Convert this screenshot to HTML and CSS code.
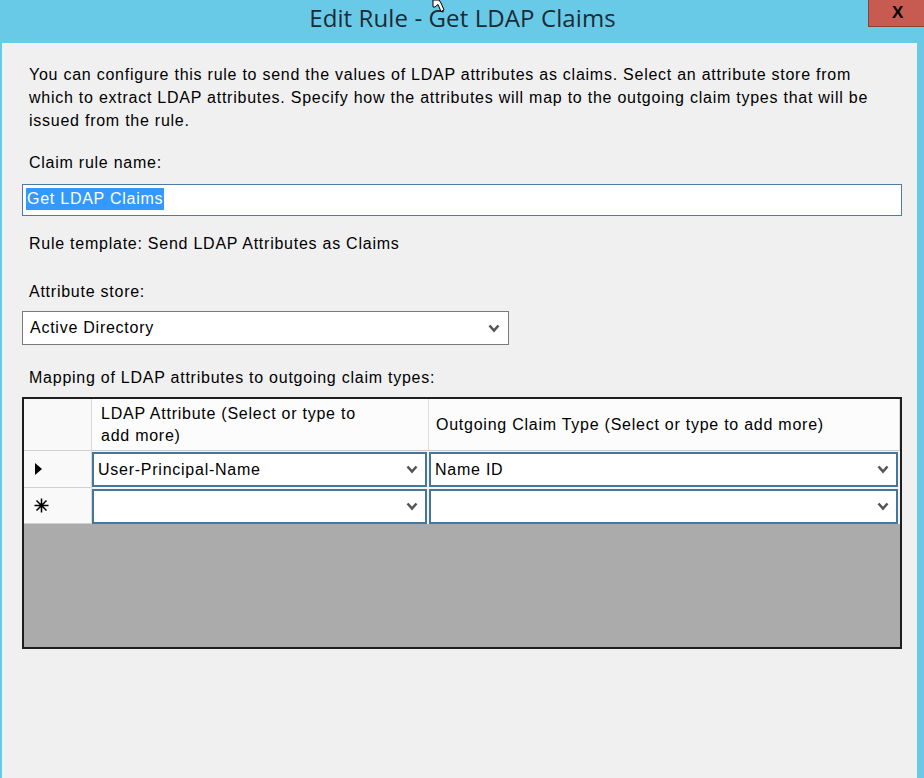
FILE: index.html
```html
<!DOCTYPE html>
<html>
<head>
<meta charset="utf-8">
<link rel="stylesheet" href="styles.css">
</head>
<body>
<div class="window">
  <div class="titlebar">
    <span class="title">Edit Rule - Get LDAP Claims</span>
    <div class="close">X</div>
    <svg class="cursor" width="18" height="16" viewBox="0 0 18 16"><polygon points="1,0 7,0 9,3 12,10 9,11.5 6,4.5 3,7 1,7" fill="#fff" stroke="#000" stroke-width="1"/></svg>
  </div>
  <div class="client">
    <p class="intro">You can configure this rule to send the values of LDAP attributes as claims. Select an attribute store from which to extract LDAP attributes. Specify how the attributes will map to the outgoing claim types that will be issued from the rule.</p>
    <div class="label l-name">Claim rule name:</div>
    <div class="textbox"><span class="sel">Get LDAP Claims</span></div>
    <div class="label l-template">Rule template: Send LDAP Attributes as Claims</div>
    <div class="label l-store">Attribute store:</div>
    <div class="combo">
      <span>Active Directory</span>
      <svg class="chev" width="12" height="9" viewBox="0 0 12 9"><polyline points="1.5,1.5 6,6.5 10.5,1.5" fill="none" stroke="#555" stroke-width="2.6"/></svg>
    </div>
    <div class="label l-map">Mapping of LDAP attributes to outgoing claim types:</div>
    <div class="grid">
      <div class="row head">
        <div class="rh"></div>
        <div class="hc c1">LDAP Attribute (Select or type to<br>add more)</div>
        <div class="hc c2">Outgoing Claim Type (Select or type to add more)</div>
      </div>
      <div class="row data r1">
        <div class="rh"><span class="arrow"></span></div>
        <div class="cell"><div class="box"><span>User-Principal-Name</span><svg class="chev" width="12" height="9" viewBox="0 0 12 9"><polyline points="1.5,1.5 6,6.5 10.5,1.5" fill="none" stroke="#555" stroke-width="2.6"/></svg></div></div>
        <div class="cell"><div class="box"><span>Name ID</span><svg class="chev" width="12" height="9" viewBox="0 0 12 9"><polyline points="1.5,1.5 6,6.5 10.5,1.5" fill="none" stroke="#555" stroke-width="2.6"/></svg></div></div>
      </div>
      <div class="row data r2">
        <div class="rh"><svg class="star" width="15" height="15" viewBox="0 0 15 15"><g stroke="#000" stroke-width="1.5"><line x1="7.5" y1="0.5" x2="7.5" y2="14.5"/><line x1="0.5" y1="7.5" x2="14.5" y2="7.5"/><line x1="2.5" y1="2.5" x2="12.5" y2="12.5"/><line x1="12.5" y1="2.5" x2="2.5" y2="12.5"/></g><circle cx="7.5" cy="7.5" r="2.2" fill="#000"/></svg></div>
        <div class="cell"><div class="box"><span></span><svg class="chev" width="12" height="9" viewBox="0 0 12 9"><polyline points="1.5,1.5 6,6.5 10.5,1.5" fill="none" stroke="#555" stroke-width="2.6"/></svg></div></div>
        <div class="cell"><div class="box"><span></span><svg class="chev" width="12" height="9" viewBox="0 0 12 9"><polyline points="1.5,1.5 6,6.5 10.5,1.5" fill="none" stroke="#555" stroke-width="2.6"/></svg></div></div>
      </div>
      <div class="empty"></div>
    </div>
  </div>
</div>
</body>
</html>
```

FILE: styles.css
```css
html, body {
  margin: 0;
  padding: 0;
}
body {
  width: 924px;
  height: 778px;
  overflow: hidden;
  background: #69cae8;
  font-family: "Liberation Sans", Arial, sans-serif;
  font-size: 16px;
  letter-spacing: 0.75px;
  color: #000;
}
.window {
  display: flex;
  flex-direction: column;
  height: 778px;
}
.titlebar {
  position: relative;
  height: 43px;
  flex: none;
  display: flex;
  justify-content: center;
  background: #69cae8;
}
.title {
  font-family: "Open Sans", "Noto Sans", sans-serif;
  font-size: 24px;
  color: #1b2b36;
  line-height: 36px;
  letter-spacing: 0.1px;
  margin-left: 1px;
}
.close {
  position: absolute;
  left: 868px;
  top: 0;
  width: 60px;
  height: 27px;
  background: #c75b52;
  border-left: 1px solid #8e3f39;
  border-bottom: 1px solid #8e3f39;
  font-family: "Liberation Sans", Arial, sans-serif;
  font-weight: bold;
  font-size: 17px;
  letter-spacing: 0;
  line-height: 25px;
  padding-left: 23px;
  box-sizing: border-box;
  color: #000;
}
.cursor {
  position: absolute;
  left: 432px;
  top: 0;
}
.client {
  flex: 1;
  margin: 0 7px 0 2px;
  background: #f0f0f0;
  border-top: 1px solid #f7f7f7;
  border-left: 1px solid #e6f4f9;
  padding: 19px 0 0 19px;
  display: flex;
  flex-direction: column;
  align-items: flex-start;
}
.intro {
  margin: 0 0 0 7px;
  width: 862px;
  line-height: 23px;
}
.label {
  margin-left: 7px;
  line-height: 23px;
}
.l-name { margin-top: 19px; }
.textbox {
  margin-top: 10px;
  width: 880px;
  height: 32px;
  box-sizing: border-box;
  background: #fff;
  border: 1px solid #4d7aa3;
  padding: 3px 0 0 3px;
}
.sel {
  display: inline-block;
  background: #3399ff;
  color: #fff;
  height: 22px;
  line-height: 22px;
  padding: 0 1px;
}
.l-template { margin-top: 16px; }
.l-store { margin-top: 25px; }
.combo {
  margin-top: 8px;
  width: 487px;
  height: 34px;
  box-sizing: border-box;
  background: #fff;
  border: 1px solid #7a7a7a;
  display: flex;
  align-items: center;
  justify-content: space-between;
  padding: 0 8px 0 7px;
}
.l-map { margin-top: 21px; }
.grid {
  margin-top: 8px;
  width: 880px;
  height: 252px;
  box-sizing: border-box;
  border: 2px solid #1e1e1e;
  background: #ababab;
  display: flex;
  flex-direction: column;
}
.row {
  display: grid;
  grid-template-columns: 68px 337px 471px;
  flex: none;
}
.head { height: 52px; }
.r1 { height: 37px; }
.r2 { height: 36px; }
.rh {
  background: #f9f9f9;
  border-right: 1px solid #d8d8d8;
  border-bottom: 1px solid #d0d0d0;
  display: flex;
  align-items: center;
  padding-left: 11px;
}
.r2 .rh { padding-left: 10px; }
.hc {
  background: #fcfcfc;
  border-right: 1px solid #dcdcdc;
  border-bottom: 1px solid #c8c8c8;
  display: flex;
  align-items: center;
  line-height: 22px;
}
.c1 { padding-left: 9px; }
.c2 { padding-left: 7px; }
.cell {
  background: #f4f4f4;
  padding: 1px 2px 1px 0;
  display: flex;
}
.r2 .cell { padding-top: 1px; padding-bottom: 0; }
.box {
  flex: 1;
  background: #fff;
  border: 2px solid #46769c;
  display: flex;
  align-items: center;
  justify-content: space-between;
  padding: 0 7px 0 4px;
}
.arrow {
  width: 0;
  height: 0;
  border-top: 6px solid transparent;
  border-bottom: 6px solid transparent;
  border-left: 7px solid #000;
}
.empty { flex: 1; }
```
